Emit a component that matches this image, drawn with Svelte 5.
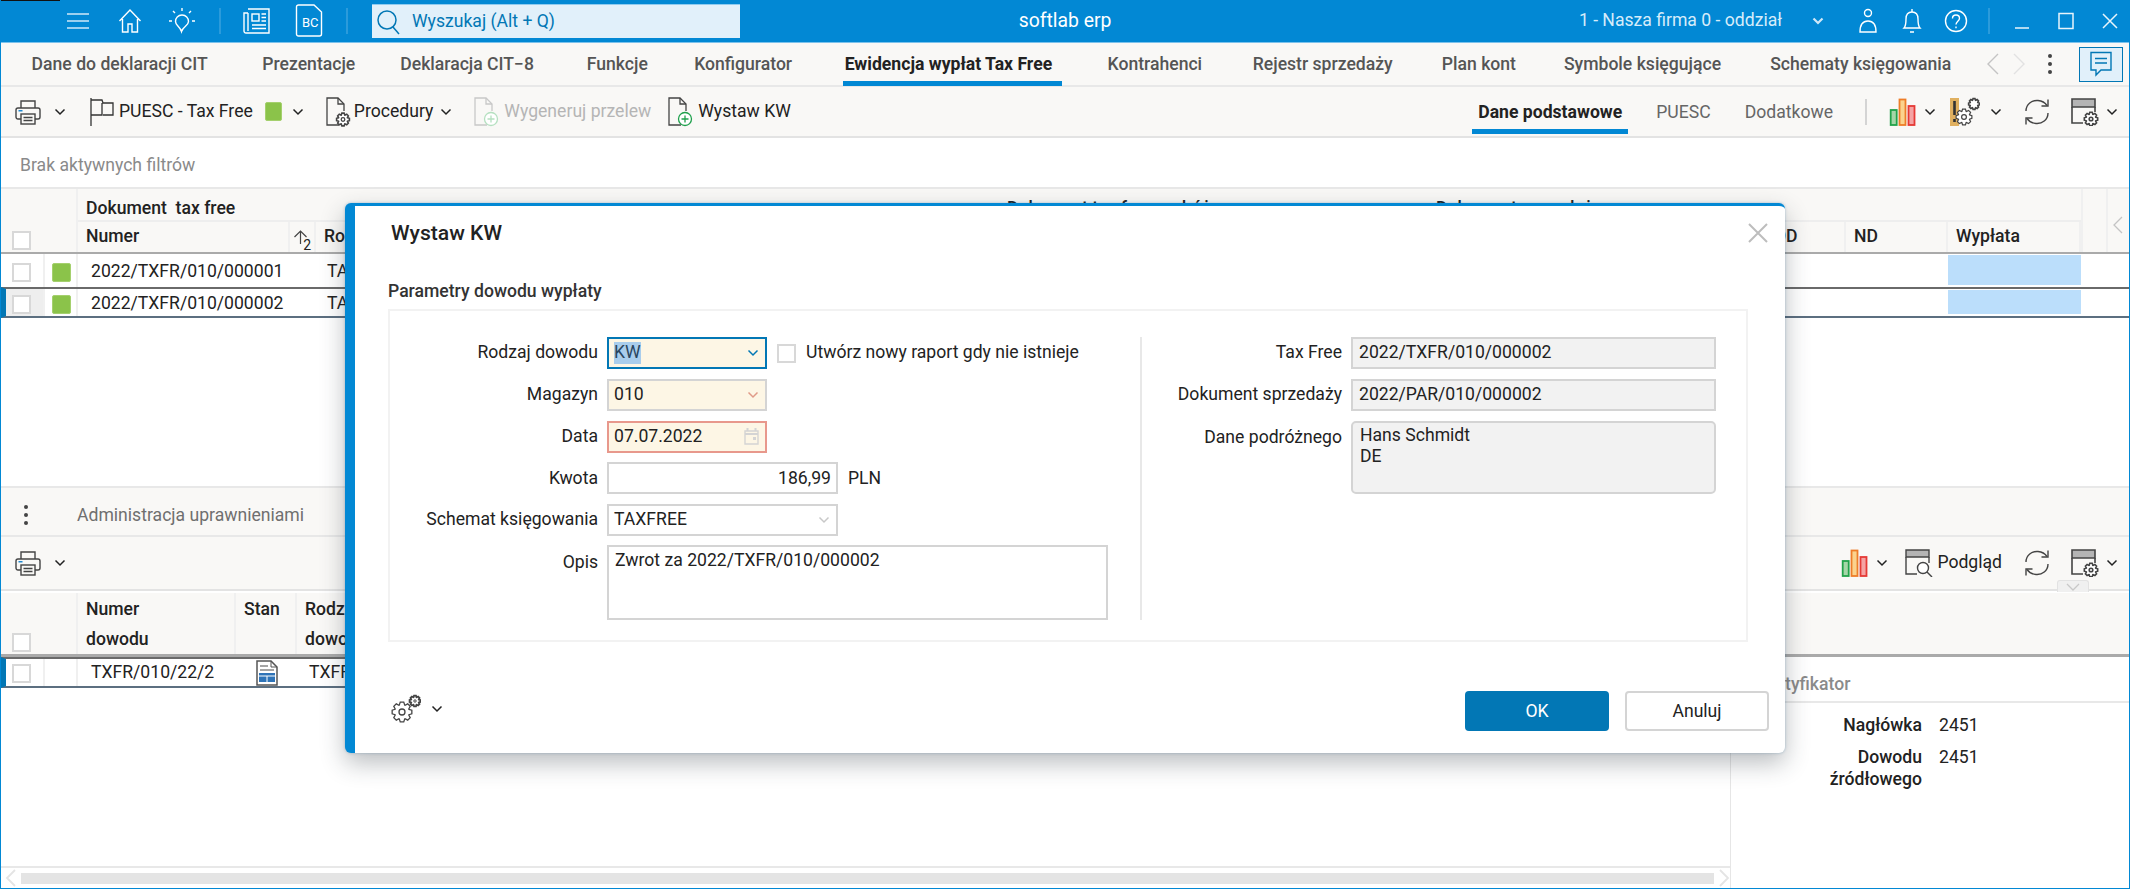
<script>
  const tabs = [['Dane do deklaracji CIT',0],['Prezentacje',9.5],['Deklaracja CIT−8',0],['Funkcje',8],['Konfigurator',1.5],['Ewidencja wypłat Tax Free',8],['Kontrahenci',11],['Rejestr sprzedaży',5.5],['Plan kont',4],['Symbole księgujące',3],['Schematy księgowania',4]];
  const active = 'Ewidencja wypłat Tax Free';
  function gear(cx, cy, R, n = 8) {
    const r = R * 0.74, pts = [];
    for (let i = 0; i < n; i++) {
      const a = (i / n) * Math.PI * 2, w = Math.PI / n;
      [[r, a - w * 0.95], [R, a - w * 0.45], [R, a + w * 0.45], [r, a + w * 0.95]].forEach(([q, t]) =>
        pts.push((cx + q * Math.cos(t)).toFixed(2) + ' ' + (cy + q * Math.sin(t)).toFixed(2)));
    }
    return 'M' + pts.join('L') + 'Z';
  }
</script>

{#snippet chev()}
  <svg class="chev" width="12" height="8" viewBox="0 0 12 8"><path d="M1.5 1.5 6 6l4.5-4.5" fill="none" stroke="#222" stroke-width="1.5"/></svg>
{/snippet}
{#snippet printer()}
  <svg width="26" height="26" viewBox="0 0 26 26" fill="none" stroke="#444" stroke-width="1.4"><path d="M6 9V2h14v7"/><path d="M6 20H3a2 2 0 0 1-2-2v-7a2 2 0 0 1 2-2h20a2 2 0 0 1 2 2v7a2 2 0 0 1-2 2h-3"/><rect x="6" y="15" width="14" height="10"/><path d="M8.5 18.500h9M8.500 21.500h9"/><rect x="3.500" y="11" width="4" height="1.500" fill="#1e88d0" stroke="none"/></svg>
{/snippet}
{#snippet chart()}
  <svg width="28" height="28" viewBox="0 0 28 28"><rect x="1.700" y="12" width="6" height="15" fill="#a5d6a7" stroke="#22a24a" stroke-width="1.800"/><rect x="10.500" y="1.500" width="6" height="25.500" fill="#fbd38d" stroke="#ee7d28" stroke-width="1.800"/><rect x="19.500" y="8" width="6" height="19" fill="#f5a3a3" stroke="#e53935" stroke-width="1.800"/></svg>
{/snippet}
{#snippet refresh()}
  <svg width="28" height="28" viewBox="0 0 28 28" fill="none" stroke="#444" stroke-width="1.400"><path d="M3 13C3 6 9 2 15 2.500c4 .3 7 2 9 5"/><path d="M25 1.500V8h-6.500"/><path d="M25 15c0 7-6 11-12 10.500-4-.3-7-2-9-5"/><path d="M3 26.500V20h6.500"/></svg>
{/snippet}
{#snippet winGear()}
  <svg width="28" height="28" viewBox="0 0 28 28" fill="none" stroke="#444" stroke-width="1.600"><path d="M1 1h23v8H1z" fill="#b4b4b4"/><path d="M1 9v16h11M24 9v5"/><path d={gear(20, 21, 6.800)} fill="#fff"/><circle cx="20" cy="21" r="1.800"/></svg>
{/snippet}
{#snippet doc(kind)}
  <svg width="26" height="30" viewBox="0 0 26 30" fill="none" stroke={kind === 'off' ? '#c8c8c8' : '#444'} stroke-width="1.300">
    <path d="M14 28H2V1h11l6 6v7"/><path d="M13 1v6h6"/>
    {#if kind === 'gear'}
      <path d={gear(18, 22.500, 6.500)} fill="#fff" stroke-width="1.600"/><circle cx="18" cy="22.500" r="1.800"/>
    {:else}
      <circle cx="18" cy="22" r="6.500" fill="#fff" stroke={kind === 'off' ? '#b5e0c0' : '#1fa04c'}/>
      <path d="M18 18.500v7M14.500 22h7" stroke={kind === 'off' ? '#b5e0c0' : '#1fa04c'}/>
    {/if}
  </svg>
{/snippet}

<div class="app">
  <span class="corner"></span>
  <header class="topbar">
    <div class="top-left">
      <span class="tico"><svg width="24" height="20" viewBox="0 0 24 20" stroke="#cfe8f8" stroke-width="1.600"><path d="M1 3h22M1 10h22M1 17h22"/></svg></span>
      <span class="tico"><svg width="24" height="26" viewBox="0 0 24 26" fill="none" stroke="#fff" stroke-width="1.400"><path d="M1.500 13 12 2l10.500 11M4.500 11v13H10v-8h4v8h5.500V11"/></svg></span>
      <span class="tico"><svg width="30" height="30" viewBox="0 0 30 30" fill="none" stroke="#fff" stroke-width="1.400"><path d="M15 9c-4 0-6.500 3-6.500 6.500 0 4 4.500 5 6 10 1.500-5 7-6 7-10C21.500 12 19 9 15 9z"/><path d="M15 2v3M6 5l2 2M24 5l-2 2M2 15h3M25 15h3"/></svg></span>
      <span class="tsep first"></span>
      <span class="tico"><svg width="28" height="28" viewBox="0 0 28 28" fill="none" stroke="#fff" stroke-width="1.400"><path d="M5 2h21v24H3a2 2 0 0 1-2-2V6h4"/><path d="M5 6v18"/><rect x="9" y="7" width="7" height="7"/><path d="M18.500 7H23M18.500 10.500H23M18.500 14H23M9 18h14M9 21.500h14"/></svg></span>
      <span class="tico"><svg width="28" height="34" viewBox="0 0 28 34" fill="none" stroke="#fff" stroke-width="1.400"><path d="M1.500 3a2 2 0 0 1 2-2H19l7.500 7v22a2 2 0 0 1-2 2h-21a2 2 0 0 1-2-2z"/></svg><b class="bc">BC</b></span>
      <span class="tsep second"></span>
      <div class="search">
        <svg width="24" height="26" viewBox="0 0 24 26" fill="none" stroke="#0277b5" stroke-width="1.500"><circle cx="11" cy="11" r="9"/><path d="m17 18 6 7"/></svg>
        <span>Wyszukaj (Alt + Q)</span>
      </div>
    </div>
    <div class="brand">softlab erp</div>
    <div class="top-right">
      <div class="firm"><span>1 - Nasza firma 0 - oddział</span>
        <svg width="12" height="8" viewBox="0 0 12 8"><path d="M1.500 1.500 6 6l4.500-4.500" fill="none" stroke="#cfe8f8" stroke-width="2.200"/></svg>
      </div>
      <span class="wico"><svg width="18" height="26" viewBox="0 0 18 26" fill="none" stroke="#fff" stroke-width="1.400"><circle cx="9" cy="5" r="3.500"/><path d="M1 24c0-7 3-11 8-11s8 4 8 11z"/></svg></span>
      <span class="wico"><svg width="20" height="26" viewBox="0 0 20 26" fill="none" stroke="#fff" stroke-width="1.400"><path d="M2 20c2-2 2-5 2-9 0-4 2-7 6-7s6 3 6 7c0 4 0 7 2 9z"/><path d="M10 1v3M8 24h4"/></svg></span>
      <span class="wico"><svg width="24" height="24" viewBox="0 0 24 24" fill="none" stroke="#fff" stroke-width="1.400"><circle cx="12" cy="12" r="10.500"/><path d="M8.500 9.500C8.500 7 10 6 12 6s3.500 1.300 3.500 3.200c0 3-3.500 3-3.500 6.300M12 17.500v1.800"/></svg></span>
      <span class="tsep third"></span>
      <span class="wico"><svg width="18" height="18" viewBox="0 0 18 18" stroke="#e8f4fb" stroke-width="1.500"><path d="M2 16h14"/></svg></span>
      <span class="wico"><svg width="18" height="18" viewBox="0 0 18 18" fill="none" stroke="#e8f4fb" stroke-width="1.500"><rect x="2" y="1.500" width="14" height="15"/></svg></span>
      <span class="wico"><svg width="18" height="18" viewBox="0 0 18 18" stroke="#e8f4fb" stroke-width="1.500"><path d="m2 2 14 14M16 2 2 16"/></svg></span>
    </div>
  </header>

  <nav class="tabs">
    <div class="tablist">
      {#each tabs as [t, extra]}
        <span class="tab" class:on={t === active} data-t={t} style:margin-left="{extra}px">{t}</span>
      {/each}
    </div>
    <div class="tabtools">
      <svg width="14" height="22" viewBox="0 0 14 22" fill="none" stroke="#c4c4c4" stroke-width="1.400"><path d="M12 1 2 11l10 10"/></svg>
      <svg width="14" height="22" viewBox="0 0 14 22" fill="none" stroke="#e2e2e2" stroke-width="1.400"><path d="m2 1 10 10L2 21"/></svg>
      <span class="dots"><i></i><i></i><i></i></span>
      <span class="chat"><svg width="24" height="26" viewBox="0 0 24 26" fill="none" stroke="#0277b5" stroke-width="1.400"><path d="M2 1.500h20V19H12l-5 5v-5H2z"/><path d="M6 7.500h12M6 12h12"/></svg></span>
    </div>
  </nav>

  <div class="toolbar top">
    <div class="tgroup">
      <span class="tb g1">{@render printer()}{@render chev()}</span>
      <span class="tb g2"><svg width="25" height="30" viewBox="0 0 25 30" fill="none" stroke="#333" stroke-width="1.300"><path d="M1 1v28M1 3h11l1 3h10v12H13M1 18h11V6"/></svg><span>PUESC - Tax Free</span><i class="green big"></i>{@render chev()}</span>
      <span class="tb g3">{@render doc('gear')}<span>Procedury</span>{@render chev()}</span>
      <span class="tb g4">{@render doc('off')}<span class="off">Wygeneruj przelew</span></span>
      <span class="tb g5">{@render doc('plus')}<span>Wystaw KW</span></span>
    </div>
    <div class="tgroup right">
      <span class="sub on">Dane podstawowe</span>
      <span class="sub">PUESC</span>
      <span class="sub">Dodatkowe</span>
      <span class="vsep"></span>
      <span class="tb t1">{@render chart()}{@render chev()}</span>
      <span class="tb t2"><svg width="30" height="30" viewBox="0 0 30 30" fill="none" stroke="#444" stroke-width="1.200"><rect x="0" y="1" width="9" height="28" fill="#e0b060" stroke="none"/><path d="M4.500 4v14M4.500 22v3" stroke="#333" stroke-width="2.600"/><path d={gear(14, 20, 8)} fill="#fff"/><circle cx="14" cy="20" r="2.400"/><path d={gear(24, 7, 5.500)} fill="#fff" stroke-width="1.600"/></svg>{@render chev()}</span>
      <span class="tb t3">{@render refresh()}</span>
      <span class="tb t4">{@render winGear()}{@render chev()}</span>
    </div>
  </div>

  <div class="filter">Brak aktywnych filtrów</div>

  <section class="upper">
    <div class="grid-head">
      <div class="hcheck"><i class="cb"></i></div>
      <div class="hstat"></div>
      <div class="hmain">
        <div class="groups">
          <span class="g-a">Dokument&nbsp; tax free</span>
          <span class="g-b">Dokument tax free podróż</span>
          <span class="g-c">Dokument sprzedaży</span>
        </div>
        <div class="cols">
          <span class="c-num">Numer</span>
          <span class="c-sort"><svg width="15" height="15" viewBox="0 0 15 15" fill="none" stroke="#444" stroke-width="1.200"><path d="M7.500 14V1.500M1.500 7l6-6 6 6"/></svg><sub>2</sub></span>
          <span class="c-fill">Rodzaj</span>
          <span class="c-d">OD</span>
          <span class="c-nd">ND</span>
          <span class="c-w">Wypłata</span>
        </div>
      </div>
      <div class="hgap"></div>
      <div class="hcollapse"><svg width="12" height="18" viewBox="0 0 12 18" fill="none" stroke="#c4c4c4" stroke-width="1.300"><path d="M10 1 2 9l8 8"/></svg></div>
    </div>
    {#each ['2022/TXFR/010/000001', '2022/TXFR/010/000002'] as n, i}
      <div class="row" class:sel={i === 1}>
        <div class="rcheck"><i class="cb"></i></div>
        <div class="rstat"><i class="green"></i></div>
        <div class="rnum">{n}</div>
        <div class="rtype">TAXFREE</div>
        <div class="rpay"></div>
      </div>
    {/each}
  </section>

  <section class="lower">
    <div class="lbar">
      <span class="dots small"><i></i><i></i><i></i></span>
      <span>Administracja uprawnieniami</span>
    </div>
    <div class="toolbar bottom">
      <span class="tb b1">{@render printer()}{@render chev()}</span>
      <div class="tgroup right">
        <span class="tb t1">{@render chart()}{@render chev()}</span>
        <span class="tb t5"><svg width="28" height="28" viewBox="0 0 28 28" fill="none" stroke="#444" stroke-width="1.400"><path d="M1 1h23v7H1z" fill="#b4b4b4"/><path d="M24 8v6M1 8v17h11"/><circle cx="18" cy="19" r="5.500" fill="#fff"/><path d="m22 23 5 5"/></svg><span>Podgląd</span></span>
        <span class="tb t3">{@render refresh()}</span>
        <span class="tb t4">{@render winGear()}{@render chev()}</span>
      </div>
      <span class="pull"><svg width="14" height="8" viewBox="0 0 14 8" fill="none" stroke="#c8c8c8" stroke-width="1.300"><path d="m1 1 6 6 6-6"/></svg></span>
    </div>
    <div class="lhead">
      <div class="hcheck tall"><i class="cb"></i></div>
      <div class="hstat"></div>
      <div class="lcol a">Numer<br />dowodu</div>
      <div class="lcol b">Stan</div>
      <div class="lcol c">Rodzaj<br />dowodu</div>
    </div>
    <div class="lbody">
      <div class="lmain">
        <div class="row lrow sel">
          <div class="rcheck"><i class="cb"></i></div>
          <div class="rstat"></div>
          <div class="lnum">TXFR/010/22/2</div>
          <div class="lstan"><svg width="22" height="26" viewBox="0 0 22 26" fill="none"><path d="M1 1h14l6 6v18H1z" fill="#fff" stroke="#555" stroke-width="1.500"/><path d="M15 1v6h6" stroke="#555"/><path d="M4 6h8M4 10h14" stroke="#888" stroke-width="1.500"/><rect x="3" y="13" width="16" height="9" fill="#2f74b8"/><path d="M3 16h16M11 16v6" stroke="#fff"/></svg></div>
          <div class="ltype">TXFR</div>
        </div>
        <div class="scroll">
          <svg width="12" height="18" viewBox="0 0 12 18" fill="none" stroke="#e4e4e4" stroke-width="1.800"><path d="M10 1 2 9l8 8"/></svg>
          <span class="track"></span>
          <svg width="12" height="18" viewBox="0 0 12 18" fill="none" stroke="#e4e4e4" stroke-width="1.800"><path d="m2 1 8 8-8 8"/></svg>
        </div>
      </div>
      <aside class="side">
        <div class="side-h">Identyfikator</div>
        <dl>
          <dt>Nagłówka</dt><dd>2451</dd>
          <dt>Dowodu źródłowego</dt><dd>2451</dd>
        </dl>
      </aside>
    </div>
  </section>

  <div class="modal">
    <div class="mhead">
      <h2>Wystaw KW</h2>
      <svg class="mclose" width="20" height="20" viewBox="0 0 20 20" stroke="#bdbdbd" stroke-width="2"><path d="m1 1 18 18M19 1 1 19"/></svg>
    </div>
    <h3>Parametry dowodu wypłaty</h3>
    <div class="fields">
      <div class="fl">
        <label>Rodzaj dowodu</label>
        <div class="with-check">
          <div class="inp req focus w160"><mark>KW</mark>
            <svg width="12" height="8" viewBox="0 0 12 8"><path d="M1.500 1.500 6 6l4.500-4.500" fill="none" stroke="#0277b5" stroke-width="1.500"/></svg>
          </div>
          <i class="cb"></i><span class="chk">Utwórz nowy raport gdy nie istnieje</span>
        </div>
        <label>Magazyn</label>
        <div class="inp req w160">010
          <svg width="12" height="8" viewBox="0 0 12 8"><path d="M1.500 1.500 6 6l4.500-4.500" fill="none" stroke="#e09a88" stroke-width="1.500"/></svg>
        </div>
        <label>Data</label>
        <div class="inp req err w160">07.07.2022
          <svg width="15" height="17" viewBox="0 0 15 17" fill="none" stroke="#d4d4d4" stroke-width="1.400"><path d="M1 3h13v13H1z"/><path d="M3.500 0v3M11.500 0v3M1 6h13" stroke-width="2"/><rect x="9" y="9" width="3" height="3" fill="#d4d4d4" stroke="none"/></svg>
        </div>
        <label>Kwota</label>
        <div class="amount"><div class="inp num w231">186,99</div><span>PLN</span></div>
        <label>Schemat księgowania</label>
        <div class="inp w231">TAXFREE
          <svg width="12" height="8" viewBox="0 0 12 8"><path d="M1.500 1.500 6 6l4.500-4.500" fill="none" stroke="#c8c8c8" stroke-width="1.500"/></svg>
        </div>
        <label class="top">Opis</label>
        <div class="inp area w501">Zwrot za 2022/TXFR/010/000002</div>
      </div>
      <div class="fr">
        <label>Tax Free</label>
        <div class="inp ro">2022/TXFR/010/000002</div>
        <label>Dokument sprzedaży</label>
        <div class="inp ro">2022/PAR/010/000002</div>
        <label class="top">Dane podróżnego</label>
        <div class="inp ro rarea">Hans Schmidt<br />DE</div>
      </div>
    </div>
    <div class="mfoot">
      <span class="mgear">
        <svg width="30" height="30" viewBox="0 0 30 30" fill="none" stroke="#444" stroke-width="1.300"><path d={gear(11, 18, 10)} fill="#fff"/><circle cx="11" cy="18" r="3"/><path d={gear(24, 7, 5.500)} fill="#fff" stroke-width="1.800"/><circle cx="24" cy="7" r="1.200" stroke-width="1"/></svg>
        {@render chev()}
      </span>
      <div class="btns"><button class="ok">OK</button><button class="cancel">Anuluj</button></div>
    </div>
  </div>
</div>

<style>
  :global(body) { margin: 0; background: #fff; }
  * { box-sizing: border-box; }
  .app { position: relative; width: 2130px; height: 889px; overflow: hidden; background: #fff; font: 17.6px/1.2 Roboto, "Noto Sans", sans-serif; color: #222; border: 1px solid #0288d4; border-top: 0; display: flex; flex-direction: column; }
  .corner { position: absolute; left: -1px; top: 0; width: 60px; height: 1px; background: #111; z-index: 2; }
  svg { display: block; flex: none; }
  i { display: block; font-style: normal; }

  .topbar { display: grid; grid-template-columns: 1fr auto 1fr; align-items: center; height: 43px; margin: 0 -1px; background: #0288d4; border-bottom: 1px solid #7cc2ec; flex: none; }
  .top-left, .top-right { display: flex; align-items: center; height: 42px; }
  .top-left { padding-left: 52px; }
  .tico { position: relative; width: 52px; display: flex; justify-content: center; align-items: center; }
  .bc { position: absolute; left: 18px; top: 11px; font-size: 13px; font-weight: 400; color: #fff; background: #0288d4; line-height: 15px; padding: 0 1px; }
  .tsep { width: 2px; height: 26px; background: #2b9bdb; }
  .tsep.first { margin: 0 10px 0 11px; }
  .tsep.second { margin: 0 25px 0 11px; }
  .search { width: 368px; height: 34px; background: #e1f0fa; border-top: 1px solid #8fcbef; display: flex; align-items: center; gap: 12px; padding-left: 4px; color: #0277b5; font-size: 17.6px; margin-left: -1px; }
  .brand { color: #fff; font-size: 19.36px; }
  .top-right { justify-content: flex-end; margin-right: -2px; }
  .firm { display: flex; align-items: center; color: #d6ecfa; font-size: 17.6px; gap: 30px; margin-right: 22px; }
  .wico { width: 44px; display: flex; justify-content: center; }
  .tsep.third { margin: 0 10px; }

  .tabs { display: flex; justify-content: space-between; height: 44px; background: #f9f8f6; border-bottom: 2px solid #e8e8e8; flex: none; }
  .tablist { display: flex; gap: 44px; padding-left: 30px; }
  .tab { display: inline-flex; flex-direction: column; align-items: center; justify-content: center; height: 43px; font-size: 17.6px; color: #555; font-weight: 500; position: relative; padding-top: 1px; }
  .tab::after { content: attr(data-t); font-weight: 700; height: 0; overflow: hidden; visibility: hidden; }
  .tab.on { color: #222; font-weight: 700; }
  .tab.on::before { content: ''; position: absolute; left: -2px; right: -10px; bottom: 0; height: 5px; background: #0288d4; }
  .tabtools { display: flex; align-items: center; padding-right: 6px; gap: 12px; }
  .dots { display: flex; flex-direction: column; gap: 4px; margin: 0 11px 0 10px; }
  .dots i { width: 4px; height: 4px; border-radius: 50%; background: #444; }
  .chat { width: 44px; height: 35px; border: 1px solid #0277b5; background: #e1f0fa; display: flex; align-items: center; justify-content: center; margin-left: 4px; }

  .toolbar { display: flex; justify-content: space-between; align-items: center; background: #f9f8f6; border-bottom: 2px solid #e3e3e3; flex: none; position: relative; }
  .toolbar.top { height: 51px; }
  .toolbar.bottom { height: 54px; }
  .tgroup { display: flex; align-items: center; height: 100%; }
  .tgroup.right { margin-left: auto; }
  .tb { display: flex; align-items: center; gap: 5px; color: #222; }
  .off { color: #b5b5b5; }
  .g1 { padding-left: 14px; gap: 13px; }
  .g2 { margin-left: 24px; gap: 6px; }
  .g2 svg:first-child { margin-right: -2px; }
  .g3 { margin-left: 21px; gap: 3px; }
  .g3 .chev { margin-left: 4px; }
  .g4 { margin-left: 21px; }
  .g5 { margin-left: 16px; }
  .green { width: 19px; height: 19px; border-radius: 2px; background: #8bc34a; border: 1px solid #a5d06e; }
  .green.big { width: 17px; height: 19px; margin: 0 4px 0 6px; }
  .sub { position: relative; height: 100%; display: flex; align-items: center; color: #666; margin-right: 34px; padding-top: 2px; }
  .sub.on { color: #222; font-weight: 700; }
  .sub.on::after { content: ''; position: absolute; left: -6px; right: -6px; bottom: 2px; height: 5px; background: #0288d4; }
  .vsep { width: 2px; height: 26px; background: #d4d4d4; margin: 0 22px 0 -2px; }
  .t1 { gap: 7px; }
  .t2 { margin-left: 14px; gap: 10px; }
  .t3 { margin-left: 21px; }
  .t4 { margin-left: 20px; gap: 7px; padding-right: 11px; }
  .t5 { margin-left: 17px; gap: 4px; }
  .b1 { padding-left: 14px; gap: 13px; }
  .pull { position: absolute; left: 2056px; bottom: -3px; width: 32px; height: 12px; background: #f0f0f0; border: 1px solid #e2e2e2; border-bottom: 0; border-radius: 3px 3px 0 0; display: flex; justify-content: center; align-items: center; }

  .filter { height: 51px; padding: 17px 0 0 19px; color: #8a8a8a; border-bottom: 2px solid #e8e8e8; flex: none; }

  .upper { height: 299px; flex: none; border-bottom: 2px solid #e8e8e8; }
  .grid-head { display: flex; height: 65px; background: #f9f8f6; border-bottom: 2px solid #aaa; }
  .hcheck { width: 44px; display: flex; align-items: flex-end; padding: 0 0 2px 11px; }
  .hstat { width: 33px; border-right: 2px solid #f0f0f0; }
  .hmain { flex: 1; display: flex; flex-direction: column; }
  .groups { height: 33px; border-bottom: 2px solid #eee; display: flex; align-items: center; font-weight: 500; position: relative; padding: 8px 0 0 8px; }
  .g-a { width: 921px; }
  .g-b { width: 429px; }
  .cols { flex: 1; display: flex; align-items: center; font-weight: 500; height: 30px; }
  .cols span { height: 100%; display: flex; align-items: center; padding-left: 8px; border-right: 2px solid #f0f0f0; }
  .c-num { width: 212px; }
  .c-sort { width: 26px; position: relative; padding-left: 3px !important; }
  .c-sort sub { position: absolute; right: 3px; bottom: 0; font-weight: 400; font-size: 14px; line-height: 14px; }
  .c-fill { width: 1450px; }
  .c-d { width: 80px; }
  .c-nd { width: 102px; }
  .c-w { width: 133px; }
  .hgap { width: 27px; border-right: 2px solid #f0f0f0; border-left: 2px solid #f0f0f0; }
  .hcollapse { width: 21px; display: flex; padding: 27px 0 0 4px; }
  .cb { width: 19px; height: 19px; background: #fff; border: 2px solid #d8d8d8; }

  .row { position: relative; display: flex; height: 33px; align-items: stretch; background: #fff; }
  .row > div { padding-top: 3px; }
  .row.sel { height: 31px; border-top: 2px solid #6a6a6a; border-bottom: 2px solid #5c6f80; border-left: 5px solid #0277b5; }
  .lrow.sel > div { padding-top: 1px; }
  .rcheck { width: 44px; padding-left: 11px; display: flex; align-items: center; border-right: 2px solid #f0f0f0; }
  .row.sel .rcheck { width: 39px; padding-left: 6px; background: #eee; }
  .row.lrow .rcheck { background: #fff; }
  .rstat { width: 33px; display: flex; align-items: center; padding-left: 7px; border-right: 2px solid #f0f0f0; }
  .rnum { width: 249px; padding-left: 13px; display: flex; align-items: center; }
  .rtype { flex: 1; display: flex; align-items: center; }
  .row > .rpay { width: 133px; margin: 1px 48px 2px 0; background: #bbdefb; padding: 0; }

  .lower { flex: 1; display: flex; flex-direction: column; min-height: 0; }
  .lbar { height: 49px; display: flex; align-items: center; background: #f9f8f6; border-bottom: 2px solid #e8e8e8; color: #6f6f6f; padding-top: 8px; flex: none; }
  .dots.small { margin: 0 49px 2px 23px; }
  .lhead { display: flex; height: 66px; background: #f9f8f6; border-bottom: 3px solid #aaa; border-top: 2px solid #fff; flex: none; font-weight: 500; }
  .hcheck.tall { padding-bottom: 2px; }
  .lcol { line-height: 30px; padding: 1px 0 0 8px; border-right: 2px solid #f0f0f0; }
  .lcol.a { width: 158px; }
  .lcol.b { width: 61px; }
  .lcol.c { width: 200px; }
  .lbody { flex: 1; display: flex; min-height: 0; }
  .lmain { width: 1730px; display: flex; flex-direction: column; border-right: 1px solid #e6e6e6; }
  .lrow { flex: none; }
  .lnum { width: 158px; padding-left: 13px; display: flex; align-items: center; }
  .lstan { width: 62px; display: flex; align-items: center; padding-left: 20px; }
  .ltype { padding-left: 11px; display: flex; align-items: center; }
  .scroll { margin-top: auto; height: 22px; border-top: 2px solid #e8e8e8; display: flex; align-items: center; gap: 0; padding-left: 4px; }
  .track { width: 1693px; height: 11px; background: #e4e4e4; margin: 0 4px; }
  .side { flex: 1; }
  .side-h { height: 46px; padding: 17px 0 0 20px; color: #8a8a8a; font-weight: 500; border-bottom: 2px solid #e8e8e8; }
  dl { margin: 11px 0 0 90px; display: grid; grid-template-columns: 101px auto; justify-content: start; row-gap: 10px; column-gap: 17px; line-height: 22px; }
  dt { text-align: right; font-weight: 500; }
  dd { margin: 0; }

  .modal { position: absolute; left: 344px; top: 203px; width: 1440px; height: 550px; background: #fff; border-left: 10px solid #0288d4; border-top: 3px solid #0288d4; border-radius: 6px; padding: 0 37px 0 33px; box-shadow: 0 10px 24px rgba(40, 50, 60, .32), 0 0 3px rgba(0, 90, 150, .3); z-index: 5; }
  .mhead { height: 55px; display: flex; justify-content: space-between; align-items: center; padding-bottom: 1px; }
  h2 { margin: 0 0 0 3px; font-size: 21.12px; font-weight: 500; color: #222; }
  .mclose { margin-right: -20px; }
  h3 { margin: 21px 0 0; font-size: 17.6px; font-weight: 500; color: #333; line-height: 19px; height: 27px; }
  .fields { height: 333px; border: 2px solid #f2f2f2; padding: 26px 0 0 2px; display: grid; grid-template-columns: 750px 1fr; }
  label { text-align: right; display: flex; align-items: center; justify-content: flex-end; }
  label.top { align-items: flex-start; padding-top: 6px; }
  .fl, .fr { display: grid; align-content: start; column-gap: 9px; row-gap: 9.75px; grid-auto-rows: 32px; }
  .fl { grid-template-columns: 206px 1fr; border-right: 2px solid #e8e8e8; height: 283px; }
  .fr { grid-template-columns: 200px 365px; }
  .inp { height: 32px; display: flex; align-items: center; justify-content: space-between; padding: 0 6px 0 5px; border: 2px solid #d4d4d4; background: #fff; }
  .w160 { width: 160px; }
  .w231 { width: 231px; }
  .w501 { width: 501px; }
  .req { background: #fdf6e5; }
  .focus { border: 2px solid #0277b5; }
  .err { border-color: #e8988c; }
  mark { background: #a9cdec; color: #2a4660; }
  .with-check { display: flex; align-items: center; }
  .with-check .cb { margin: 0 10px; }
  .amount { display: flex; align-items: center; gap: 10px; }
  .num { justify-content: flex-end; padding-right: 5px; }
  .area { align-items: flex-start; padding: 3px 6px; grid-row: span 2; }
  .fl .area { height: 75px; margin-top: -1px; }
  .ro { background: #f2f2f2; padding-left: 6px; justify-content: flex-start; }
  .rarea { display: block; height: 73px; border-radius: 5px; line-height: 21px; padding: 2px 7px; grid-row: span 2; }
  .mfoot { display: flex; justify-content: space-between; align-items: flex-start; margin-top: 49px; }
  .mgear { display: flex; align-items: center; gap: 10px; padding: 3px 0 0 3px; }
  .btns { display: flex; gap: 16px; margin-right: -21px; }
  button { width: 144px; height: 40px; border-radius: 4px; font: 17.6px Roboto, sans-serif; }
  .ok { background: #0277b5; border: 0; color: #fff; }
  .cancel { background: #fff; border: 2px solid #d4d4d4; color: #222; }
</style>
